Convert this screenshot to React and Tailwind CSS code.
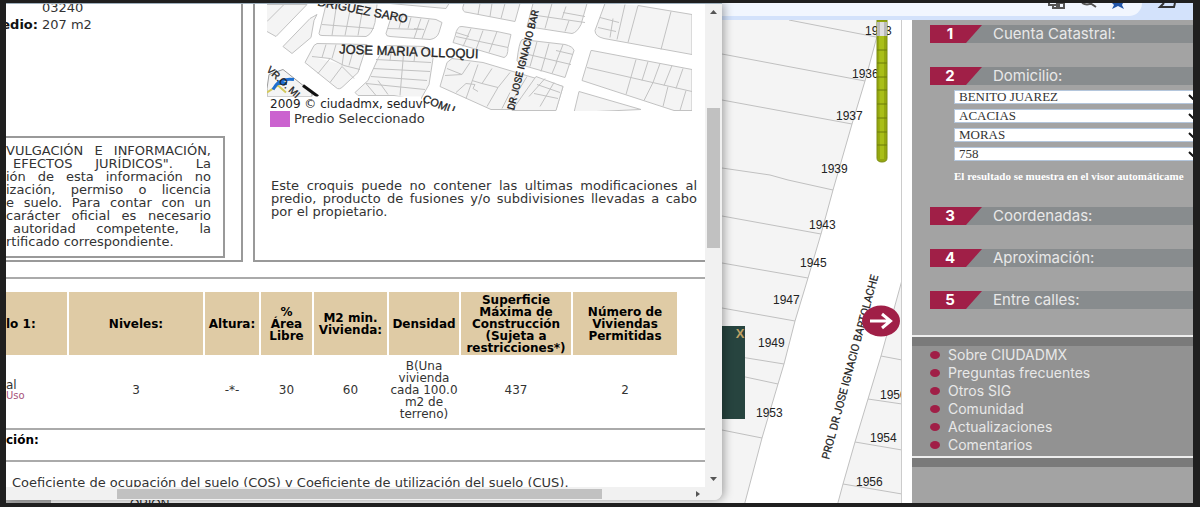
import React from "react";

const AVISO = [
  { texto: "VULGACIÓN E INFORMACIÓN," },
  { texto: "EFECTOS JURÍDICOS\". La", sangria: true },
  { texto: "ión de esta información no" },
  { texto: "ización, permiso o licencia" },
  { texto: "e suelo. Para contar con un" },
  { texto: "carácter oficial es necesario" },
  { texto: "autoridad competente, la", sangria: true },
];

const COLUMNAS = [
  { titulo: "lo 1:", ancho: "w-[61px]" },
  { titulo: "Niveles:", valor: "3", ancho: "w-[134px]" },
  { titulo: "Altura:", valor: "-*-", ancho: "w-[54px]" },
  { titulo: "% Área Libre", valor: "30", ancho: "w-[51px]" },
  { titulo: "M2 min. Vivienda:", valor: "60", ancho: "w-[73px]" },
  { titulo: "Densidad", valor: "B(Una vivienda cada 100.0 m2 de terreno)", ancho: "w-[70px]" },
  { titulo: "Superficie Máxima de Construcción (Sujeta a restricciones*)", valor: "437", ancho: "w-[110px]" },
  { titulo: "Número de Viviendas Permitidas", valor: "2", ancho: "w-[104px]" },
];

const DOMICILIO = [
  { etiqueta: "Delegación", valor: "BENITO JUAREZ" },
  { etiqueta: "Colonia", valor: "ACACIAS" },
  { etiqueta: "Calle", valor: "MORAS" },
  { etiqueta: "Número", valor: "758" },
];

const ENLACES = [
  "Sobre CIUDADMX",
  "Preguntas frecuentes",
  "Otros SIG",
  "Comunidad",
  "Actualizaciones",
  "Comentarios",
];

function Croquis() {
  return (
    <svg viewBox="267 4 425 106" className="block h-[107px] w-[425px] font-['Liberation_Sans']" role="img" aria-label="Croquis">
      <g fill="#f4f4f4" stroke="#c2c2c2" strokeWidth="1">
        <path d="M267 4H307L276 36L267 31M267 21L284 4" />
        <path d="M317 14L310 18L283 46L292 53L311 37L314 20Z" />
        <path d="M326 4L319 33Q319 35 322 35L366 36Q372 34 375 22L377 4M322 24L374 28M336 8L332 35M350 10L345 35M362 12L358 35" />
        <path d="M392 14L386 33Q386 36 390 36L430 39Q437 38 439 32L442 22L436 19ZM387 28L421 29M402 16L399 28M411 17L408 28M421 18L414 38M429 19L422 38M414 28L424 29" />
        <path d="M390 3L446 8L449 3" />
        <path d="M464 3Q460 12 468 12L515 21L520 3M480 3L478 14M492 3L490 16M505 3L501 18" />
        <path d="M462 26Q457 25 455 36L453 42L504 57Q508 56 508 47L511 34L497 31ZM456 36L508 47M471 28L463 46M483 30L476 49M497 31L489 52M456 32L469 36" />
        <path d="M317 43L314 45L305 62L336 87Q339 90 343 86L358 72L367 44ZM312 56L330 58L344 65L360 69M326 44L322 57M336 44L332 58M345 44L342 65M355 44L349 65M330 58L318 73M342 66L330 82M342 66L354 78" />
        <path d="M386 45L378 58L368 80L355 92L358 95H394L420 100L429 84L433 58L425 46ZM376 59L431 62M373 68L430 71M371 76L427 80M366 83L425 89M404 48L400 95M392 46L390 60M416 46L414 61M378 80L388 94M366 83L376 95" />
        <path d="M452 58L447 62L440 86L491 109H556L563 86L483 62Z" />
        <path fill="none" d="M470 62L462 74L447 68M478 64L466 98M492 68L482 83L472 80M510 72L498 87L482 83M498 87L487 106M527 76L510 104M466 83L475 84L473 88L478 91M510 92L502 108M445 75L462 74M466 83L456 92" />
        <path d="M533 3L527 26L572 33Q577 32 581 24L587 3M530 14L585 22M552 3L545 28M566 6L562 18M563 12L585 16M569 20L565 31" />
        <path d="M522 39Q519 42 517 60L520 64L565 77L574 50Q573 46 565 44ZM520 52L571 64M537 41L530 66M549 43L541 71M563 44L556 62M556 50L573 54M557 61L552 73" />
        <path d="M536 76L563 86L556 110H512ZM545 78L529 96M554 82L540 106M534 93L558 98M537 84L560 92" />
        <path d="M605 3L595 30Q595 36 604 38L692 54V14L638 5M625 4L617 39M638 5L628 42M671 11L661 49M600 17L619 22M598 27L616 31M613 18L610 37" />
        <path d="M591 50L582 80L674 110H692V69L592 50Z" />
        <path fill="none" d="M587 67L692 91M636 59L626 94M648 61L642 80M660 63L653 82M672 65L664 85M683 68L676 88M653 82L644 100M668 86L663 106M686 90L680 110" />
        <path d="M579 91L641 109L574 112Z" />
        <path d="M269 74L283 69L312 92V96H267V88Z" stroke="#9c9c9c" />
      </g>
      <path d="M303 85L318 96" stroke="#111" strokeWidth="3" />
      <path d="M267 92L278 85L286 92" fill="none" stroke="#d3c95c" strokeWidth="2" />
      <path d="M273 89Q279 77 294 79M277 83L287 83" fill="none" stroke="#1d6fd0" strokeWidth="3" />
      <path d="M267 96H421V110H267Z" fill="#fff" />
      <g fill="#222" fontSize="11" stroke="#222" strokeWidth="0.3">
        <text transform="translate(317 5) rotate(11)" fontSize="12">DRIGUEZ SARO</text>
        <text transform="translate(339 53) rotate(2)" fontSize="13">JOSE MARIA OLLOQUI</text>
        <text transform="translate(514 110) rotate(-76)" fontSize="10" fontFamily="Roboto">DR JOSE IGNACIO BAR</text>
        <text transform="translate(266 70) rotate(43)" fontSize="10">VR.O. MI</text>
        <text transform="translate(422 101) rotate(22)">COMU</text>
      </g>
      <text x="270" y="107" fontSize="12" fontFamily="DejaVu Sans" fill="#222">2009 © ciudadmx, seduvi</text>
    </svg>
  );
}

function Ficha() {
  return (
    <section className="absolute top-0 left-0 flex w-[716px] max-w-full flex-col overflow-hidden rounded-br-lg border-t border-[#9fb0bd] bg-[#f1f1f1] font-['DejaVu_Sans',sans-serif] text-[13px] text-[#333] shadow-[2px_0_10px_rgba(0,0,0,0.35)]">
      <div className="flex">
        <div className="h-[483px] min-w-0 flex-1 overflow-hidden bg-white">
          <div className="flex h-[258px] gap-[10px] overflow-hidden">
            <div className="flex w-[237px] flex-col justify-between border-r-2 border-b-2 border-[#999] pb-[2px]">
              <div className="-mt-[5px] leading-[17px]">
                <p className="pl-9">03240</p>
                <p className="flex gap-1 whitespace-nowrap">
                  <b className="flex w-8 justify-end text-[#111]">edio:</b>207 m2
                </p>
              </div>
              <div className="mr-4 border-2 border-l-0 border-[#999] pt-[6px] pr-3 pb-2 leading-[13px]">
                {AVISO.map((linea) => (
                  <p
                    key={linea.texto}
                    className={`whitespace-nowrap [text-align-last:justify] ${linea.sangria ? "pl-[7px]" : ""}`}
                  >
                    {linea.texto}
                  </p>
                ))}
                <p>rtificado correspondiente.</p>
              </div>
            </div>
            <div className="min-w-0 flex-1 border-b-2 border-l-2 border-[#999] pr-2 pl-3">
              <Croquis />
              <div className="flex h-4 items-center gap-1 pl-[3px]">
                <span className="h-4 w-5 bg-[#cb63cf]" />
                <span>Predio Seleccionado</span>
              </div>
              <p className="mt-[52px] pl-1 text-justify leading-[13px]">
                Este croquis puede no contener las ultimas modificaciones al
                predio, producto de fusiones y/o subdivisiones llevadas a cabo
                por el propietario.
              </p>
            </div>
          </div>
          <div className="mt-[15px] h-[153px] border-y-2 border-[#aaa] pt-[13px]">
            <table className="-ml-[2px] table-fixed border-separate border-spacing-x-[2px] border-spacing-y-0 text-center text-[12px] leading-[12px]">
              <thead>
                <tr className="h-[63px] bg-[#dfcba5] text-black">
                  {COLUMNAS.map((c) => (
                    <th key={c.titulo} className={`${c.ancho} px-[3px] py-0 first:px-0 first:text-left`}>{c.titulo}</th>
                  ))}
                </tr>
              </thead>
              <tbody>
                <tr className="h-[70px]">
                  <td className="p-0 text-left">
                    al
                    <a href="#uso" className="block text-[10px] leading-[10px] text-[#a8527a]">Uso</a>
                  </td>
                  {COLUMNAS.slice(1).map((c) => (
                    <td key={c.titulo} className="p-0">{c.valor}</td>
                  ))}
                </tr>
              </tbody>
            </table>
          </div>
          <h2 className="h-[32px] border-b-2 border-[#aaa] pt-[2px] text-[12px] leading-[16px] font-bold text-black">ción:</h2>
          <p className="pt-[13px] pl-[6px] leading-[16px] whitespace-nowrap">
            Coeficiente de ocupación del suelo (COS) y Coeficiente de utilización del suelo (CUS).
          </p>
        </div>
        <div className="flex w-[17px] flex-col items-center">
          <svg viewBox="0 0 17 16" className="h-[104px] w-[17px]" preserveAspectRatio="xMidYMin meet">
            <path d="M5 10h7L8.500 6z" fill="#555" />
          </svg>
          <div className="h-[140px] w-[13px] bg-[#c1c1c1]" />
          <svg viewBox="0 0 17 16" className="mt-auto h-4 w-[17px]">
            <path d="M5 6h7L8.500 10z" fill="#555" />
          </svg>
        </div>
      </div>
      <div className="flex h-[13px] items-center bg-[#f1f1f1]">
        <div className="ml-[111px] h-[10px] w-[485px] bg-[#c1c1c1]" />
        <svg viewBox="0 0 8 10" className="mr-5 ml-auto h-[10px] w-2">
          <path d="M2 2v6l4-3z" fill="#555" />
        </svg>
      </div>
    </section>
  );
}

function Mapa() {
  return (
    <div className="relative min-w-0 flex-1 overflow-hidden border-r border-[#ccc]">
      <svg viewBox="6 20 895 483" preserveAspectRatio="xMaxYMin slice" className="absolute inset-0 h-full w-full font-['Liberation_Sans']">
        <path d="M6 20H901V503H6Z" fill="#fff" />
        <g fill="#f4f4f4" stroke="#c0c0c0" strokeWidth="1">
          <path d="M0 10H885L876 40L865 81L852 124L833 190L821 234L808 278L795 321L784 364L778 384L762 438L743 510H0Z" />
          <path d="M902 280L881 356L868 399L855 442L843 484L836 510H902Z" />
          <path fill="none" d="M789 20L876 37M722 54L865 81M722 100L852 124M722 168L770 175L788 180L833 190M722 216L821 234M722 263L808 278M722 308L795 321M722 354L784 364M722 372L778 384M722 430L762 438M881 356L902 360M868 399L902 404M855 442L902 450M843 484L902 494" />
        </g>
        <path d="M6 499H51V503H6Z" fill="#aaa" />
        <path d="M722 326H745V419H722Z" fill="#27443f" />
        <g fill="#222" fontSize="12">
          <text x="865" y="35">1933</text>
          <text x="852" y="78">1936</text>
          <text x="836" y="120">1937</text>
          <text x="821" y="173">1939</text>
          <text x="809" y="229">1943</text>
          <text x="800" y="267">1945</text>
          <text x="773" y="304">1947</text>
          <text x="758" y="347">1949</text>
          <text x="756" y="417">1953</text>
          <text x="880" y="399">1950</text>
          <text x="870" y="442">1954</text>
          <text x="856" y="486">1956</text>
          <text x="130" y="508">ORION</text>
        </g>
        <text transform="translate(829 460) rotate(-75)" fontSize="11" fontFamily="Roboto" fill="#222" stroke="#222" strokeWidth="0.2">
          PROL DR JOSE IGNACIO BARTOLACHE
        </text>
      </svg>
      <button className="absolute top-[306px] right-[155px] h-4 w-3 text-[13px] leading-4 font-bold text-[#bda164] font-['Liberation_Sans']">X</button>
      <div className="absolute top-0 right-[13px] h-[143px] w-3">
        <svg viewBox="0 0 12 143" className="h-full w-full">
          <path d="M1 0H11V138Q11 142 6 142Q1 142 1 138Z" fill="#94a70f" stroke="#7d8d12" />
          <path d="M3 16H8V139H4Z" fill="#a9bf18" />
          <path d="M1 2H11V16H1Z" fill="#b9b9b9" />
          <path d="M4 2H8V16H4Z" fill="#dedede" />
          <path d="M1 30H11M1 43H11M1 57H11M1 70H11M1 84H11M1 98H11M1 112H11M1 125H11" stroke="#6d7c0b" />
        </svg>
        <input type="range" aria-label="Acercamiento" className="absolute inset-0 h-full w-full opacity-0" />
      </div>
      <button aria-label="Ocultar panel" className="absolute top-[285px] right-px h-8 w-[38px]">
        <svg viewBox="0 0 38 32" className="h-full w-full">
          <ellipse cx="19" cy="16" rx="19" ry="15.500" fill="#a01f47" />
          <path d="M8 16H28M20 9L28.500 16L20 23" fill="none" stroke="#fff" strokeWidth="3" />
        </svg>
      </button>
    </div>
  );
}

function Titulo({ numero, children }) {
  return (
    <h3 className="flex h-[18px] items-center bg-[#888c8e] text-[15px] leading-[18px] text-[#e8e8e8]">
      <span className="relative flex h-full w-[52px] shrink-0 items-center">
        <svg viewBox="0 0 52 18" className="absolute inset-0 h-full w-full">
          <path d="M0 0H52L36 18H0Z" fill="#a01f47" />
        </svg>
        <b className="relative w-10 text-center text-white">{numero}</b>
      </span>
      <span className="pl-[11px]">{children}</span>
    </h3>
  );
}

function Panel() {
  return (
    <aside className="flex w-[281px] shrink-0 flex-col overflow-hidden bg-[#a3a3a3] font-['Inter',sans-serif]">
      <div className="flex flex-col gap-6 pt-[5px] pb-[26px] pl-[18px]">
        <Titulo numero="1">Cuenta Catastral:</Titulo>
        <div>
          <Titulo numero="2">Domicilio:</Titulo>
          <div className="mt-[5px] -mr-[5px] ml-6 flex flex-col gap-[5px]">
            {DOMICILIO.map((d) => (
              <label key={d.etiqueta} className="relative block h-[14px]">
                <select aria-label={d.etiqueta} className="block h-[14px] w-full appearance-none border border-[#b4c6dc] bg-white pl-1 font-['Liberation_Serif',serif] text-[13px] leading-[12px] text-[#333]">
                  <option>{d.valor}</option>
                </select>
                <svg viewBox="0 0 10 6" className="absolute top-1 right-0 h-[6px] w-[10px]">
                  <path d="M1 1L5 5L9 1" fill="none" stroke="#111" strokeWidth="2" />
                </svg>
              </label>
            ))}
          </div>
          <p className="mt-2 ml-6 overflow-hidden font-['Liberation_Serif',serif] text-[11px] leading-[14px] font-bold whitespace-nowrap text-white">
            El resultado se muestra en el visor automáticame
          </p>
        </div>
        <Titulo numero="3">Coordenadas:</Titulo>
        <Titulo numero="4">Aproximación:</Titulo>
        <Titulo numero="5">Entre calles:</Titulo>
      </div>
      <ul className="border-t-2 border-[#eee] bg-[#929292] pb-[2px] text-[14px] leading-[18px] text-[#e8e8e8]">
        <li aria-hidden="true" className="h-[9px] bg-[#7a7a7a]" />
        {ENLACES.map((texto) => (
          <li key={texto} className="flex h-[18px] items-center gap-2 pl-[18px]">
            <span className="h-2 w-[10px] rounded-[50%] bg-[#a01f47]" />
            <a href="#info">{texto}</a>
          </li>
        ))}
      </ul>
      <div className="h-[11px] border-t-2 border-[#eee] bg-[#7a7a7a]" />
    </aside>
  );
}

function BarraNavegador() {
  return (
    <div className="flex h-[17px] bg-[#d3e2fb]">
      <div className="mb-1 flex flex-1 justify-end overflow-hidden rounded-br-2xl bg-[#f1f6fe]">
        <svg viewBox="0 0 96 13" className="h-[13px] w-[96px]" fill="none">
          <path d="M3 0V2H13M7 2V5H15M11 0V4M13 0H18V5H13Z" stroke="#555" strokeWidth="2" />
          <path d="M36 0Q41 3 46 0M44 0L50 4" stroke="#555" strokeWidth="2" />
          <path d="M66 0H77L76 2L78 6L72 3L66 6L68 2Z" fill="#2155a8" />
        </svg>
      </div>
      <svg viewBox="0 0 51 13" className="h-[13px] w-[51px]" fill="none">
        <path d="M22 0L18 4H32L33 0" stroke="#333" strokeWidth="2" />
      </svg>
    </div>
  );
}

function App() {
  return (
    <div className="flex min-h-screen bg-[#1f1f1f] pt-[3px] pr-[7px] pb-1 pl-[6px]">
      <main className="relative flex min-w-0 flex-1 flex-col overflow-hidden bg-white">
        <BarraNavegador />
        <div className="flex flex-1 gap-[10px]">
          <Mapa />
          <Panel />
        </div>
        <Ficha />
      </main>
    </div>
  );
}

export default App;
